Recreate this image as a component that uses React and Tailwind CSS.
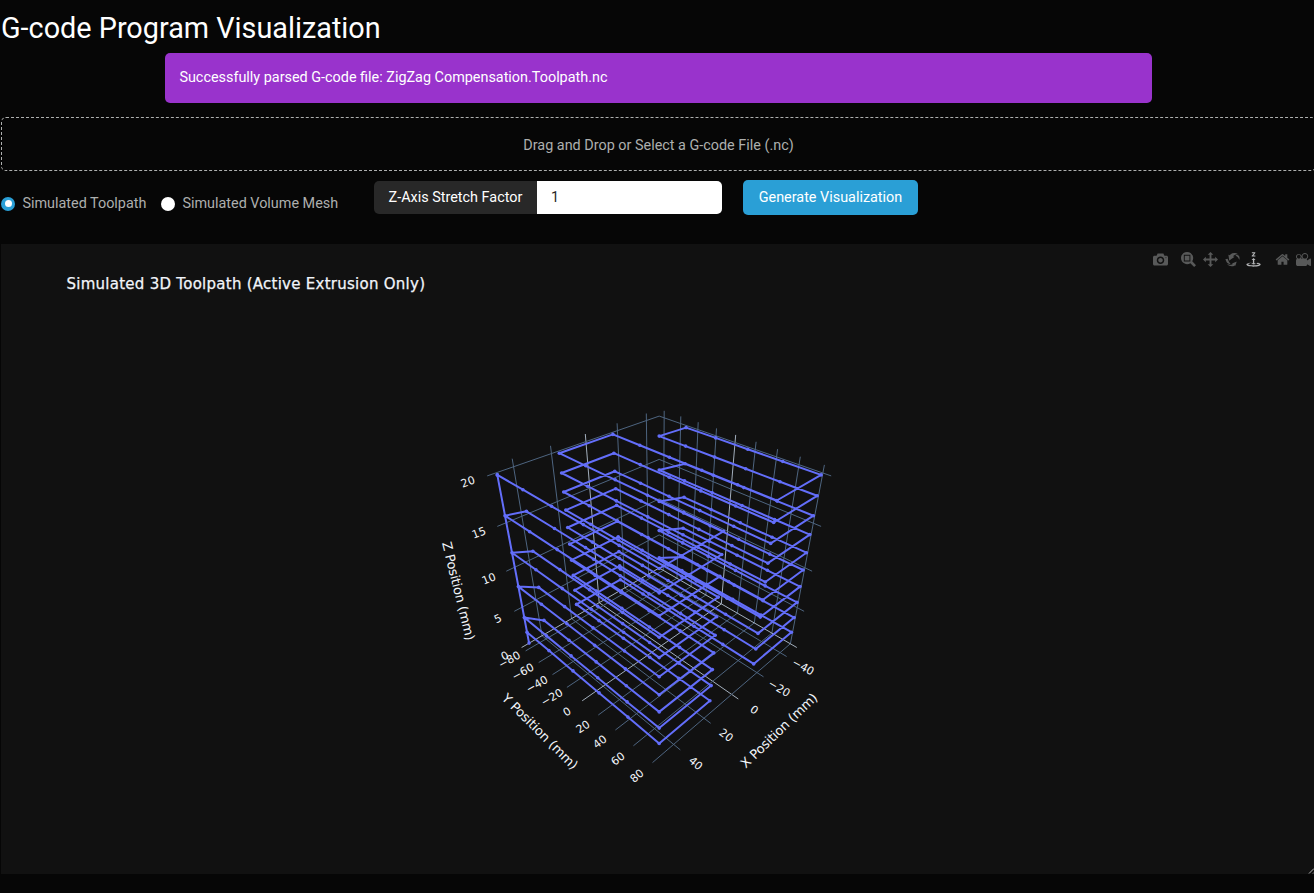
const CX = 659.2;
const CY = 568;
const FOCAL = 541;
const EYE = 2.598;
const B = 0.512;
const TICK = 0.526;
const FLOOR = -0.512;

function project([x, y, z]) {
  const depth = EYE - (x + y + z) / Math.sqrt(3);
  return [
    CX + (((y - x) / Math.SQRT2) * FOCAL) / depth,
    CY - (((2 * z - x - y) / Math.sqrt(6)) * FOCAL) / depth,
  ];
}

const pts = (list) =>
  list.map((p) => project(p).map((n) => n.toFixed(1)).join(",")).join(" ");

const toX = (v) => -0.0105 + 0.01015 * v;
const toY = (v) => 0.0055 + 0.006 * v;
const toZ = (v) => FLOOR + 0.05 * v;

const grid = [];
[-40, -20, 0, 20, 40].forEach((v) => {
  const x = toX(v);
  grid.push({ zero: v === 0, points: [[x, -B, TICK], [x, -B, FLOOR], [x, TICK, FLOOR]] });
});
[-80, -60, -40, -20, 0, 20, 40, 60, 80].forEach((v) => {
  const y = toY(v);
  grid.push({ zero: v === 0, points: [[-B, y, TICK], [-B, y, FLOOR], [TICK, y, FLOOR]] });
});
[0, 5, 10, 15, 20].forEach((v) => {
  const z = toZ(v);
  grid.push({ zero: v === 0, points: [[TICK, -B, z], [-B, -B, z], [-B, TICK, z]] });
});

const E = 0.49;
const stops = [-E, -0.295, -0.098, 0.098, 0.295, E];
const lanes = [E, 0.164, -0.164, -E];

const path = [[E, -E, 0.488], [E, -E, -0.49]];
for (let k = 1; k <= 10; k++) {
  const z = toZ(2 * k);
  const layer = [];
  lanes.forEach((x, i) => {
    const ys = i % 2 === 0 ? stops : [...stops].reverse();
    ys.forEach((y) => layer.push([x, y, z]));
  });
  if (k % 2 === 0) layer.reverse();
  path.push(...(k === 1 ? layer : layer.slice(1)));
}

const labels = [
  ["20", 468, 482, -20], ["15", 479, 533, -20], ["10", 489, 579, -22], ["5", 498, 619, -24], ["0", 505, 656, -28],
  ["−80", 509.5, 660, -29], ["−60", 523, 672, -29], ["−40", 537, 684.5, -30], ["−20", 552, 697.5, -31],
  ["0", 567, 712, -32], ["20", 583, 727, -34], ["40", 600, 742, -36], ["60", 618, 759, -38], ["80", 637, 776, -40],
  ["−40", 803, 667, 29], ["−20", 779, 688.5, 31], ["0", 754, 710, 34], ["20", 726, 735.5, 37], ["40", 695.5, 763.5, 40],
];

const axisTitles = [
  ["Z Position (mm)", 458.5, 591, 76],
  ["Y Position (mm)", 540, 731.5, 45],
  ["X Position (mm)", 779, 730.5, -44],
];

function Scene() {
  return (
    <svg className="block h-[630px] w-full" viewBox="1 244 1313 630" fontFamily='"DejaVu Sans", Verdana, sans-serif'>
      <g fill="none" strokeWidth="1">
        {grid.map((g, i) => (
          <polyline key={i} points={pts(g.points)} stroke={g.zero ? "#a3afbd" : "#4e6580"} />
        ))}
      </g>
      <polyline points={pts(path)} fill="none" stroke="#636efa" strokeWidth="2" strokeLinejoin="round" />
      <g fill="#636efa">
        {path.map((p, i) => {
          const [x, y] = project(p);
          return <circle key={i} cx={x.toFixed(1)} cy={y.toFixed(1)} r="1.8" />;
        })}
      </g>
      <g fill="#f2f5fa" textAnchor="middle">
        {labels.map(([t, x, y, a], i) => (
          <text key={i} fontSize="11" dominantBaseline="central" transform={`translate(${x} ${y}) rotate(${a})`}>{t}</text>
        ))}
        {axisTitles.map(([t, x, y, a]) => (
          <text key={t} fontSize="13" textLength="101" dominantBaseline="central" transform={`translate(${x} ${y}) rotate(${a})`}>{t}</text>
        ))}
      </g>
      <text x="66.5" y="289" fontSize="15" fill="#f2f5fa" stroke="#f2f5fa" strokeWidth="0.25" textLength="358.5">
        Simulated 3D Toolpath (Active Extrusion Only)
      </text>
    </svg>
  );
}

const FLIP = "matrix(1 0 0 -1 0 850)";
const icons = [
  { name: "camera", vb: "0 0 1000 1000", ml: "", active: false, d: "m500 450c-83 0-150-67-150-150 0-83 67-150 150-150 83 0 150 67 150 150 0 83-67 150-150 150z m400 150h-120c-16 0-34 13-39 29l-31 93c-6 15-23 28-40 28h-340c-16 0-34-13-39-28l-31-94c-6-15-23-28-40-28h-120c-55 0-100-45-100-100v-450c0-55 45-100 100-100h800c55 0 100 45 100 100v450c0 55-45 100-100 100z m-400-550c-138 0-250 112-250 250 0 138 112 250 250 250 138 0 250-112 250-250 0-138-112-250-250-250z m365 380c-19 0-35 16-35 35 0 19 16 35 35 35 19 0 35-16 35-35 0-19-16-35-35-35z" },
  { name: "zoom", vb: "0 0 1000 1000", ml: "ml-[13px]", active: false, d: "m1000-25l-250 251c40 63 63 138 63 218 0 224-182 406-407 406-224 0-406-182-406-406s183-406 407-406c80 0 155 22 218 62l250-250 125 125z m-812 250l0 438 437 0 0-438-437 0z m62 375l313 0 0-312-313 0 0 312z" },
  { name: "pan", vb: "0 0 1000 1000", ml: "ml-[7px]", active: false, d: "m1000 350l-187 188 0-125-250 0 0 250 125 0-188 187-187-187 125 0 0-250-250 0 0 125-188-188 186-187 0 125 252 0 0-250-125 0 187-188 188 188-125 0 0 250 250 0 0-126 187 188z" },
  { name: "orbit", vb: "0 0 1000 1000", ml: "ml-[7px]", active: false, d: "m922 660c-5 4-9 7-14 11-359 263-580-31-580-31l-102 28 58-400c0 1 1 1 2 2 118 108 351 249 351 249s-62 27-100 42c88 83 222 183 347 122 16-8 30-17 44-27-2 1-4 2-6 4z m36-329c0 0 64 229-88 296-62 27-124 14-175-11 157-78 225-208 249-266 8-19 11-31 11-31 2 5 6 15 11 32-5-13-8-20-8-20z m-775-239c70-31 117-50 198-32-121 80-199 346-199 346l-96-15-58-12c0 0 55-226 155-287z m603 133l-317-139c0 0 4-4 19-14 7-5 24-15 24-15s-177-147-389 4c235-287 536-112 536-112l31-22 100 299-4-1z m-298-153c6-4 14-9 24-15 0 0-17 10-24 15z" },
  { name: "turntable", vb: "0 0 1000 1000", ml: "ml-[6px]", active: true, d: "m833 5l-17 108v41l-130-65 130-66c0 0 0 38 0 39 0-1 36-14 39-25 4-15-6-22-16-30-15-12-39-16-56-20-90-22-187-23-279-23-261 0-341 34-353 59 3 60 228 110 228 110-140-8-351-35-351-116 0-120 293-142 474-142 155 0 477 22 477 142 0 50-74 79-163 96z m-374 94c-58-5-99-21-99-40 0-24 65-43 144-43 79 0 143 19 143 43 0 19-42 34-98 40v216h87l-132 135-133-135h88v-216z m167 515h-136v1c16 16 31 34 46 52l84 109v54h-230v-71h124v-1c-16-17-28-32-44-51l-89-114v-51h245v72z" },
  { name: "home", vb: "0 0 928.6 1000", ml: "ml-[14px]", active: false, d: "m786 296v-267q0-15-11-26t-25-10h-214v214h-143v-214h-214q-15 0-25 10t-11 26v267q0 1 0 2t0 2l321 264 321-264q1-1 1-4z m124 39l-34-41q-5-5-12-6h-2q-7 0-12 3l-386 322-386-322q-7-4-13-4-7 2-12 7l-35 41q-4 5-3 13t6 12l401 334q18 15 42 15t43-15l136-114v109q0 8 5 13t13 5h107q8 0 13-5t5-13v-227l122-102q5-5 6-12t-4-13z" },
  { name: "movie", vb: "0 0 1000 1000", ml: "ml-[6px]", active: false, d: "m938 413l-188-125c0 37-17 71-44 94 64 38 107 107 107 187 0 121-98 219-219 219-121 0-219-98-219-219 0-61 25-117 66-156h-115c30 33 49 76 49 125 0 103-84 187-187 187s-188-84-188-187c0-57 26-107 65-141-38-22-65-62-65-109v-250c0-70 56-126 125-126h500c69 0 125 56 125 126l188-126c34 0 62 28 62 63v375c0 35-28 63-62 63z m-750 0c-69 0-125 56-125 125s56 125 125 125 125-56 125-125-56-125-125-125z m406-1c-87 0-157 70-157 157 0 86 70 156 157 156s156-70 156-156-70-157-156-157z" },
];

function ModeBar() {
  return (
    <div className="absolute top-[8px] left-[1151.5px] flex items-start">
      {icons.map((ic) => (
        <svg
          key={ic.name}
          viewBox={ic.vb}
          className={`h-[15px] w-[15px] shrink-0 ${ic.ml} ${ic.active ? "text-[#b4b5b7]" : "text-[#585959]"}`}
        >
          <path d={ic.d} transform={FLIP} fill="currentColor" />
        </svg>
      ))}
    </div>
  );
}

export default function App() {
  return (
    <div className="h-[893px] w-full overflow-hidden bg-[#060606] pl-px font-['Roboto',sans-serif] text-[14.4px] text-[#adafae]">
      <h1 className="flex h-[53px] items-center pt-[3px] text-[28.8px] leading-none text-white">
        <span>G-code Program Visualization</span>
      </h1>
      <div className="ml-[164px] flex h-[50px] w-[987px] items-center rounded-[5px] bg-[#9933cc] px-[14.4px] text-white">
        <span>Successfully parsed G-code file: ZigZag Compensation.Toolpath.nc</span>
      </div>
      <div className="mt-[14px] flex h-[54px] w-[1315px] items-center justify-center rounded-[5px] border border-dashed border-[#adafae] pt-[4px]">
        Drag and Drop or Select a G-code File (.nc)
      </div>
      <div className="mt-[9px] flex h-[64px] items-start">
        <label className="mt-[13px] flex items-center">
          <span className="flex size-[14px] items-center justify-center rounded-full bg-[#2a9fd6]">
            <span className="size-[7px] rounded-full bg-white" />
          </span>
          <span className="ml-[7.4px] w-[138.6px]">Simulated Toolpath</span>
        </label>
        <label className="mt-[13px] flex items-center">
          <span className="size-[14px] rounded-full bg-white" />
          <span className="ml-[7.4px] w-[191.6px]">Simulated Volume Mesh</span>
        </label>
        <div className="mt-[1px] flex h-[33px] w-[348px] overflow-hidden rounded-[5px]">
          <div className="flex w-[163px] items-center justify-center bg-[#282828] text-white">Z-Axis Stretch Factor</div>
          <div className="flex flex-1 items-center bg-white pl-[14px] text-[#282828]">1</div>
        </div>
        <button className="ml-[21px] h-[35px] w-[175px] rounded-[5px] bg-[#2a9fd6] text-white">Generate Visualization</button>
      </div>
      <div className="relative h-[630px] w-[1313px] bg-[#111111]">
        <Scene />
        <ModeBar />
        <svg className="absolute right-0 bottom-0 h-[6px] w-[6px]" viewBox="0 0 6 6" stroke="#b5b5b5" strokeWidth="1">
          <path d="M1 5.5L6 .5M5 5.5L6 4.5" />
        </svg>
      </div>
    </div>
  );
}
